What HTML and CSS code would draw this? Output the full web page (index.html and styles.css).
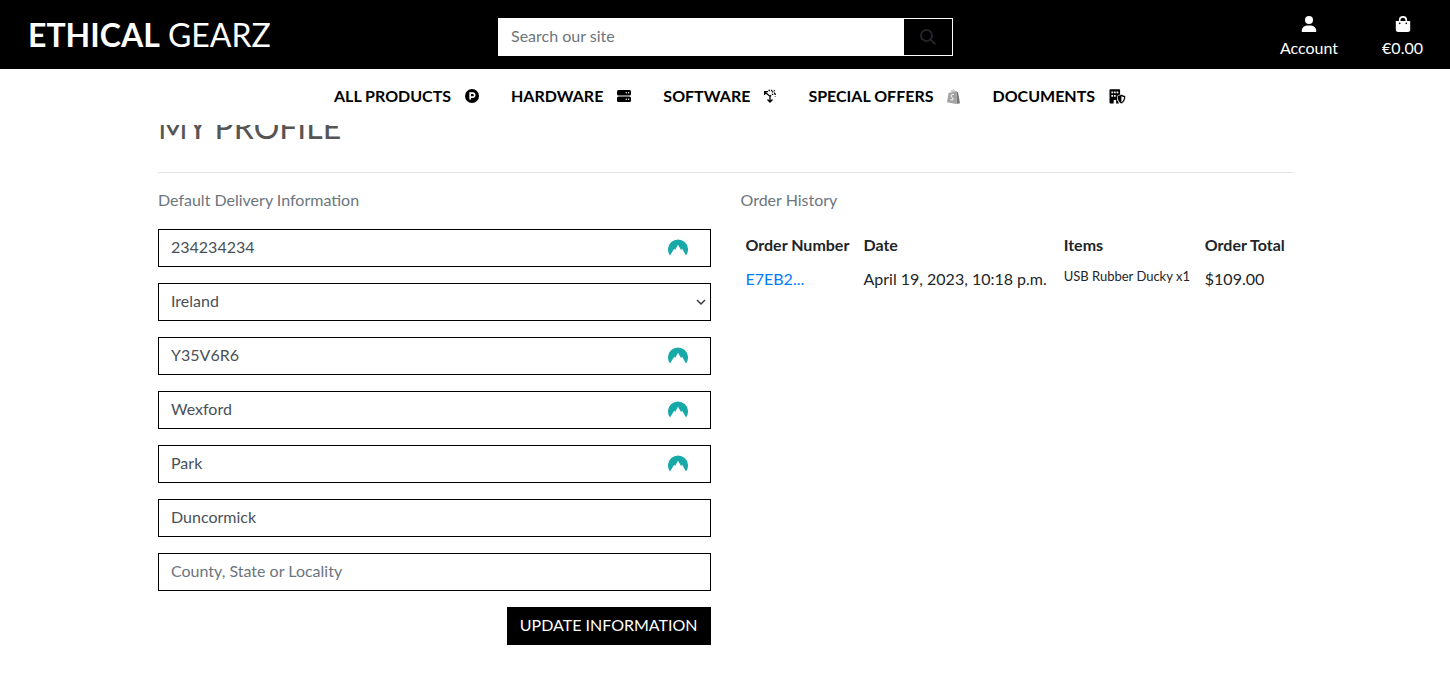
FILE: index.html
```html
<!DOCTYPE html>
<html lang="en">
<head>
<meta charset="utf-8">
<meta name="viewport" content="width=device-width, initial-scale=1">
<title>Ethical Gearz</title>
<link rel="stylesheet" href="styles.css">
</head>
<body>
<svg class="sprite" aria-hidden="true">
  <symbol id="peak" viewBox="0 0 20 17">
    <path fill="#17a8a8" d="M2 16.500A10 10 0 1 1 18 16.500L14 9.600l-.8 1.300.4 1L10 5.800 7.400 10.400l.8 1.200-2-1.800z"/>
  </symbol>
</svg>
<header class="site-header">
  <div class="topbar">
    <a class="brand" href="#"><strong>ETHICAL</strong> GEARZ</a>
    <form class="search" role="search">
      <input class="search-input" type="search" placeholder="Search our site" aria-label="Search our site">
      <button class="search-button" type="submit" aria-label="Search">
        <svg width="16" height="16" viewBox="0 0 16 16" fill="none" stroke="currentColor" stroke-width="2"><circle cx="6.5" cy="6.5" r="5.5"/><path d="M10.5 10.5 15.3 15.3"/></svg>
      </button>
    </form>
    <div class="user-links">
      <a class="user-link" href="#">
        <svg width="16" height="16" viewBox="0 0 16 16" fill="currentColor"><circle cx="8" cy="4" r="4"/><path d="M.8 16v-1.400A5.200 5.200 0 0 1 6 9.400h4a5.200 5.200 0 0 1 5.200 5.200V16z"/></svg>
        <span>Account</span>
      </a>
      <a class="user-link" href="#">
        <svg width="16" height="16" viewBox="0 0 16 16"><path d="M4.700 7V4.200a3.300 3.300 0 0 1 6.600 0V7" fill="none" stroke="currentColor" stroke-width="1.600"/><path d="M.8 5h14.400v8.500a2.500 2.500 0 0 1-2.500 2.500H3.300a2.500 2.500 0 0 1-2.500-2.500z" fill="currentColor"/><circle cx="4.700" cy="7.400" r=".8"/><circle cx="11.300" cy="7.400" r=".8"/></svg>
        <span>€0.00</span>
      </a>
    </div>
  </div>
  <nav class="main-nav" aria-label="Main">
    <a href="#">ALL PRODUCTS
      <svg width="14" height="14" viewBox="0 0 14 14"><circle cx="7" cy="7" r="7"/><path d="M5.200 10.500V4.200h2.500a1.900 1.900 0 0 1 0 3.900H5.200" fill="none" stroke="#fff" stroke-width="1.700"/></svg></a>
    <a href="#">HARDWARE
      <svg width="14" height="14" viewBox="0 0 14 14"><rect y="1" width="14" height="5.500" rx="1.600"/><rect y="7.500" width="14" height="5.500" rx="1.600"/><g fill="#fff"><circle cx="9.300" cy="3.700" r=".7"/><circle cx="11.700" cy="3.700" r=".7"/><circle cx="9.300" cy="10.300" r=".7"/><circle cx="11.700" cy="10.300" r=".7"/></g></svg></a>
    <a href="#">SOFTWARE
      <svg width="12" height="14" viewBox="0 0 12 14" fill="none" stroke="#000" stroke-width="1.300"><path d="M6 13V7.200L1 3.200M.6 6V2.600H4M3.500 10.500 6 13l2.500-2.500"/><path d="m6 7.200 5-3.500M4.500 1.500h5M8 3.200l3-1.700M11.200 4.500v3" stroke-dasharray="1.400 1"/></svg></a>
    <a href="#">SPECIAL OFFERS
      <svg width="13" height="15" viewBox="0 0 13 15"><path fill="#a2a2a2" d="m1.600 4 2-.6C4 1.600 5 .5 6.300.5c.8 0 1.300.7 1.600 1.600l1-.2L9.200 15 0 13.300z"/><path fill="#777" d="m9.300 2 1.800 1.500L13 14.200 9.500 15z"/><path d="M7 5.600C5.600 5 4 5.600 4 7c0 1.500 2.200 1.600 2.200 3 0 1.300-1.500 1.400-2.900.4M4.600 3.500c.2-1.200.8-2 1.700-2 .6 0 .9.700.9 1.500" fill="none" stroke="#fff" stroke-width="1"/></svg></a>
    <a href="#">DOCUMENTS
      <svg width="17" height="15" viewBox="0 0 17 15"><path d="M1.500.3h8.600a1 1 0 0 1 1 1v4.500L8 7.500v3.300L10 14.500H7.100V11H4.700v3.500H1.500a1 1 0 0 1-1-1V1.300a1 1 0 0 1 1-1z"/><path fill="#fff" d="M2.400 2.600h1.700v1.700H2.400zM5 2.600h1.700v1.700H5zM7.600 2.600h1.700v1.700H7.600zM2.400 6h1.700v1.700H2.400zM5 6h1.700v1.700H5z"/><path d="m12.400 5.400 4.100 1.500c.2 3.700-1.200 6.500-4.100 7.900-2.900-1.400-4.300-4.200-4.100-7.900z" stroke="#fff" stroke-width=".5"/><path d="m12.400 7.200 2.600 1c0 2.100-.9 3.900-2.600 5z" fill="#fff"/></svg></a>
  </nav>
</header>

<main class="profile">
  <h1 class="title">MY PROFILE</h1>
  <div class="columns">
    <section>
      <p class="section-label">Default Delivery Information</p>
      <form class="delivery">
        <div class="field"><input type="text" aria-label="Phone Number" value="234234234"><svg class="peak" width="20" height="17"><use href="#peak"/></svg></div>
        <div class="field"><select aria-label="Country"><option>Ireland</option></select><svg class="chevron" width="10" height="7" viewBox="0 0 10 7" fill="none" stroke="#343a40" stroke-width="1.500"><path d="m1 1 4 4 4-4"/></svg></div>
        <div class="field"><input type="text" aria-label="Postal Code" value="Y35V6R6"><svg class="peak" width="20" height="17"><use href="#peak"/></svg></div>
        <div class="field"><input type="text" aria-label="Town or City" value="Wexford"><svg class="peak" width="20" height="17"><use href="#peak"/></svg></div>
        <div class="field"><input type="text" aria-label="Street Address 1" value="Park"><svg class="peak" width="20" height="17"><use href="#peak"/></svg></div>
        <div class="field"><input type="text" aria-label="Street Address 2" value="Duncormick"></div>
        <div class="field"><input type="text" aria-label="County, State or Locality" placeholder="County, State or Locality"></div>
        <button class="update" type="submit">UPDATE INFORMATION</button>
      </form>
    </section>
    <section>
      <p class="section-label">Order History</p>
      <table class="orders">
        <thead><tr><th>Order Number</th><th>Date</th><th>Items</th><th>Order Total</th></tr></thead>
        <tbody><tr><td><a href="#">E7EB2...</a></td><td>April 19, 2023, 10:18 p.m.</td><td class="items">USB Rubber Ducky x1</td><td>$109.00</td></tr></tbody>
      </table>
    </section>
  </div>
</main>
</body>
</html>
```
FILE: styles.css
```css
*, *::before, *::after { box-sizing: border-box; }

body {
  margin: 0;
  background: #fff;
  color: #212529;
  font: 16px/24px Lato, sans-serif;
}

a { text-decoration: none; }
svg { flex: none; }
input, select, button { font: inherit; border-radius: 0; }
.sprite { display: none; }

.site-header {
  position: sticky;
  top: 0;
  z-index: 10;
  background: #fff;
}

.topbar {
  display: grid;
  grid-template-columns: 1fr minmax(0, 455px) 1fr;
  align-items: center;
  padding: 0 27px 0 28px;
  min-height: 69px;
  background: #000;
}

.brand {
  color: #fff;
  font-size: 32px;
  line-height: 40px;
  white-space: nowrap;
}

.search { display: flex; margin-top: 4px; }

.search-input {
  flex: 1;
  min-width: 0;
  height: 38px;
  padding: 5px 12px 7px;
  border: 1px solid #fff;
  background: #fff;
  appearance: none;
}

.search-input::placeholder { color: #6c757d; opacity: 1; }

.search-button {
  display: flex;
  align-items: center;
  justify-content: center;
  width: 49px;
  border: 1px solid #fff;
  border-left: 0;
  background: #000;
  color: #212529;
}

.user-links {
  display: flex;
  justify-content: flex-end;
  gap: 44px;
}

.user-link {
  display: flex;
  flex-direction: column;
  align-items: center;
  padding-top: 6px;
  color: #fff;
}

.user-link span { margin-top: 4px; }

.main-nav {
  display: flex;
  flex-wrap: wrap;
  justify-content: center;
  gap: 0 32px;
  padding: 15px 0 17px 10px;
}

.main-nav a {
  display: flex;
  align-items: center;
  gap: 14px;
  color: #000;
  font-weight: 700;
}

.profile {
  max-width: 1136px;
  margin: -18px auto 0;
  padding-left: 1px;
}

.title {
  margin: 0;
  padding-bottom: 25px;
  border-bottom: 1px solid #e3e3e3;
  color: #555;
  font-size: 32px;
  font-weight: 400;
  line-height: 40px;
}

.columns {
  display: grid;
  grid-template-columns: 1fr 1fr;
  gap: 30px;
  padding-top: 15px;
}

.section-label { margin: 0 0 17px; color: #6c757d; }

.delivery {
  display: flex;
  flex-direction: column;
  gap: 16px;
}

.field { position: relative; display: flex; }

.field input, .field select {
  width: 100%;
  height: 38px;
  padding: 4px 12px 8px;
  border: 1px solid #000;
  background: #fff;
  color: #495057;
  appearance: none;
}

.field select { padding: 5px 12px 7px; }
.field input::placeholder { color: #6c757d; opacity: 1; }

.peak, .chevron { position: absolute; pointer-events: none; }
.peak { top: 10px; right: 23px; }
.chevron { top: 16px; right: 5px; }

.update {
  align-self: flex-end;
  height: 38px;
  padding: 5px 12px 7px;
  border: 1px solid #000;
  background: #000;
  color: #fff;
}

.orders { width: 100%; border-collapse: collapse; }
.orders th, .orders td { padding: 4px 5px 6px; text-align: left; vertical-align: top; white-space: nowrap; }
.orders a { color: #007bff; }
.orders .items { font-size: 13px; line-height: 18px; }
```
